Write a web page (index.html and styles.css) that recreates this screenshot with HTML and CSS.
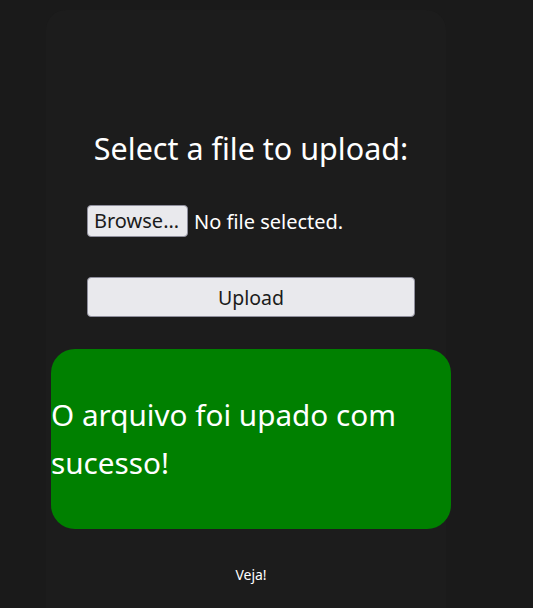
FILE: index.html
```html
<!DOCTYPE html>
<html lang="en">
<head>
  <meta charset="UTF-8">
  <meta name="viewport" content="width=device-width, initial-scale=1.0">
  <title>Upload</title>
  <link rel="stylesheet" href="styles.css">
</head>
<body>

<div class="card">
  <div class="content">
    <h1>Select a file to upload:</h1>

    <form class="upload-form" action="#" method="POST" enctype="multipart/form-data">
      <!-- File picker -->
      <label class="file-row">
        <input type="file" name="file" class="file-input">
        <span class="browse-btn">Browse…</span>
        <span class="file-name">No file selected.</span>
      </label>

      <button type="submit" class="upload-btn">Upload</button>
    </form>

    <!-- Result message -->
    <div class="success">
      <p>O arquivo foi upado com sucesso!</p>
    </div>

    <a class="see-link" href="#">Veja!</a>
  </div>
</div>

</body>
</html>
```

FILE: styles.css
```css
/* General Styling */
body {
  margin: 0;
  background: #1a1a1a;
  font-family: 'Noto Sans', sans-serif;
  color: #fff;
  overflow: hidden;
}

.card {
  width: 400px;
  height: 598px;
  margin: 10px 0 0 46px;
  background: #1c1c1c;
  border-radius: 20px 20px 0 0;
}

.content {
  width: 400px;
  margin-left: 5px;
  padding-top: 112px;
}

h1 {
  margin: 0;
  text-align: center;
  font-size: 30.5px;
  font-weight: normal;
  line-height: 52px;
}

.upload-form {
  width: 328px;
  margin: 0 auto;
}

.file-row {
  display: flex;
  align-items: center;
  gap: 6px;
  height: 32px;
  margin-top: 31px;
  cursor: pointer;
}

.file-input {
  display: none;
}

.browse-btn {
  background: #e9e9ed;
  color: #1b1b1b;
  border: 1px solid #8f8f9d;
  border-radius: 4px;
  padding: 0 8px 0 6px;
  height: 30px;
  line-height: 30px;
  font-size: 20px;
}

.file-name {
  font-size: 20px;
}

.upload-btn {
  display: block;
  width: 100%;
  height: 40px;
  margin-top: 40px;
  background: #e9e9ed;
  color: #1b1b1b;
  border: 1px solid #8f8f9d;
  border-radius: 4px;
  font-family: inherit;
  font-size: 19.5px;
}

/* Success message */
.success {
  display: flex;
  align-items: center;
  height: 180px;
  margin-top: 32px;
  background: #008000;
  border-radius: 24px;
}

.success p {
  margin: 0;
  font-size: 29.7px;
  line-height: 48px;
}

.see-link {
  display: block;
  margin-top: 36px;
  text-align: center;
  color: #fff;
  font-size: 14px;
  text-decoration: none;
}
```
